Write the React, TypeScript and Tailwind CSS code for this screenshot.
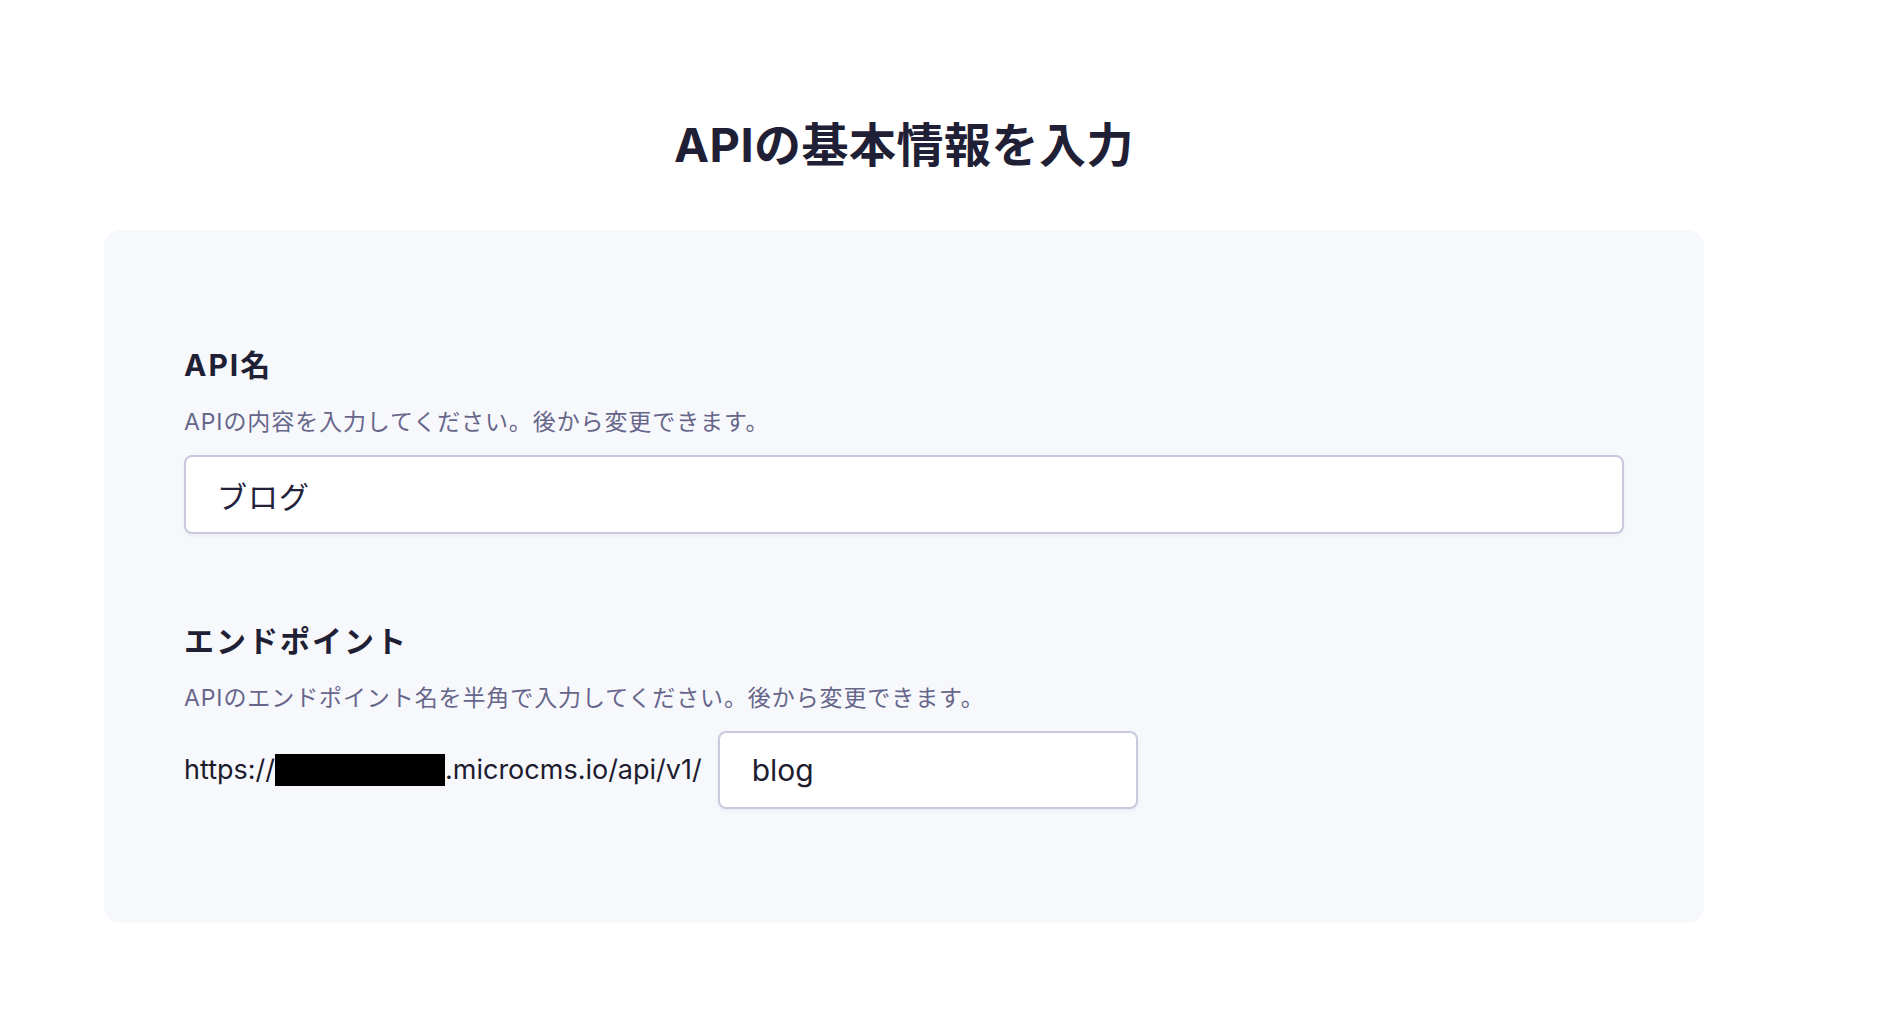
import { useState } from "react";

const font = "font-['Inter','Noto_Sans_CJK_JP',sans-serif]";

function Field({
    label,
    help,
    children,
}: {
    label: string;
    help: string;
    children: React.ReactNode;
}) {
    return (
        <div>
            <h2 className="text-[30px] leading-[42px] font-bold tracking-[2px] text-[#1f1f35]">{label}</h2>
            <p className="mt-[18px] text-[23px] leading-[37px] tracking-[0.9px] text-[#66668a]">{help}</p>
            <div className="mt-[14px]">{children}</div>
        </div>
    );
}

export default function App() {
    const [name, setName] = useState("ブログ");
    const [endpoint, setEndpoint] = useState("blog");

    return (
        <div className={`min-h-screen bg-white ${font}`}>
            <div className="w-[1600px] ml-[104px] pt-[110px] pb-[100px]">
                {/* Title */}
                <h1 className="text-center text-[47px] leading-[69px] font-bold tracking-[0.5px] text-[#1f2036]">
                    APIの基本情報を入力
                </h1>

                {/* Card */}
                <div className="mt-[51px] rounded-[16px] bg-[#f7f8fc] px-20 pt-[114px] pb-[114px]">
                    <Field label="API名" help="APIの内容を入力してください。後から変更できます。">
                        <input
                            value={name}
                            onChange={e => setName(e.target.value)}
                            className="block w-full h-[79px] rounded-[8px] border-2 border-[#c9c9dd] bg-white pl-[31px] text-[30px] tracking-[1px] text-[#22223a] shadow-[0_2px_4px_rgba(30,30,80,0.05)] outline-none"
                        />
                    </Field>

                    <div className="mt-[86px]">
                        <Field label="エンドポイント" help="APIのエンドポイント名を半角で入力してください。後から変更できます。">
                            <div className="flex items-center gap-[16px]">
                                <div className="flex items-center text-[27px] text-[#1c1c2e]">
                                    <span>https://</span>
                                    <span className="inline-block w-[170px] h-[32px] bg-black" />
                                    <span>.microcms.io/api/v1/</span>
                                </div>
                                <input
                                    value={endpoint}
                                    onChange={e => setEndpoint(e.target.value)}
                                    className="block w-[420px] h-[78px] rounded-[8px] border-2 border-[#c9c9dd] bg-white pl-[32px] text-[30px] text-[#1c1c2e] shadow-[0_2px_4px_rgba(30,30,80,0.05)] outline-none"
                                />
                            </div>
                        </Field>
                    </div>
                </div>
            </div>
        </div>
    );
}
